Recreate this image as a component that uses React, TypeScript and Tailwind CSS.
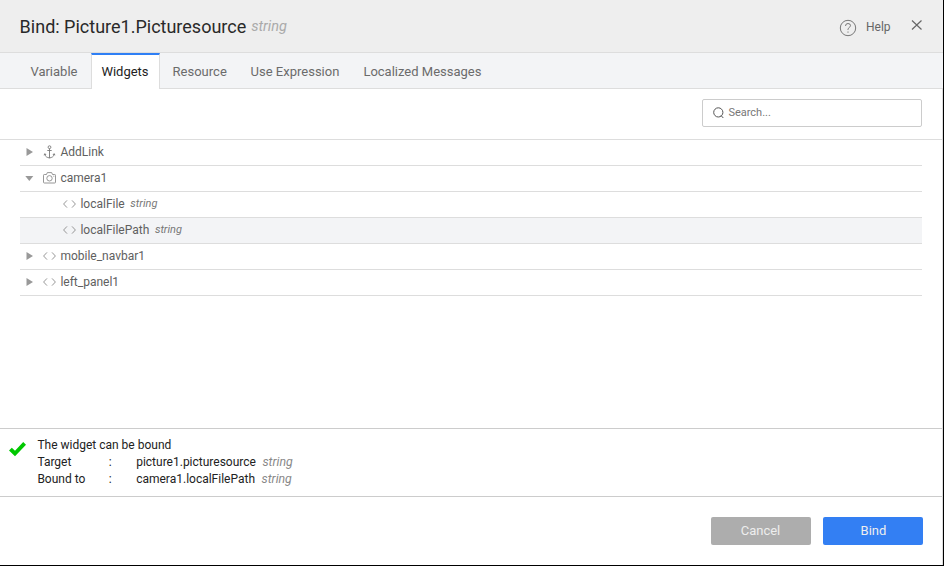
import type { ReactNode } from 'react';

const tabs = [
  { label: 'Variable', box: 'w-[71px] pl-[10.4px]' },
  { label: 'Widgets', box: 'w-[69px] pl-[9.4px]' },
  { label: 'Resource', box: 'w-[78px] pl-[12.6px]' },
  { label: 'Use Expression', box: 'w-[113px] pl-[12.6px]' },
  { label: 'Localized Messages', box: 'w-[140px] pl-[12.4px]' },
];

function CodeIcon() {
  return (
    <svg width="13" height="12" viewBox="0 0 13 12" fill="none" stroke="#8b8b8b" strokeWidth="0.9">
      <path d="M4 2.400.6 6 4 9.600M9 2.400 12.400 6 9 9.600" />
    </svg>
  );
}

function AnchorIcon() {
  return (
    <svg width="13" height="14" viewBox="0 0 13 14" fill="none" stroke="#777" strokeWidth="0.9">
      <circle cx="6.500" cy="2.200" r="1.400" />
      <path d="M6.500 3.600V13M4.300 5.500h4.400M1.900 8.800v1C2.300 11.500 4 12.500 6.500 13c2.500-.5 4.200-1.500 4.600-3.200v-1M1 10.200l.9-1.500 1.200 1.300M12 10.200l-.9-1.500L9.900 10" />
    </svg>
  );
}

function CameraIcon() {
  return (
    <svg width="13" height="12" viewBox="0 0 13 12" fill="none" stroke="#8b8b8b" strokeWidth="0.9">
      <path d="M1.300 2.500h2.200l.8-1.900h4.400l.8 1.900h2.200q.8 0 .8.800v6.900q0 .8-.8.800H1.300q-.8 0-.8-.8V3.300q0-.8.800-.8Z" />
      <circle cx="6.500" cy="6.300" r="2.700" />
      <path d="M10.300 4.200h1" />
    </svg>
  );
}

function Caret({ open }: { open?: boolean }) {
  return (
    <svg width="10" height="10" viewBox="0 0 10 10" fill="#999">
      {open ? <path d="M1.300 3h8L5.300 8Z" /> : <path d="M2.500 1v8L9 5Z" />}
    </svg>
  );
}

type RowProps = { icon: ReactNode; label: string; caret?: 'open' | 'closed'; type?: string; selected?: boolean };

function Row({ icon, label, caret, type, selected }: RowProps) {
  return (
    <div className={`flex h-[26px] items-center border-b border-[#ddd] pb-px text-[#606060] ${selected ? 'bg-[#f3f4f6]' : ''} ${caret ? 'pl-[4px]' : 'pl-[43px]'}`}>
      {caret && <span className="mr-[9px] w-[10px]"><Caret open={caret === 'open'} /></span>}
      <span className="flex w-[13px] shrink-0 justify-center">{icon}</span>
      <span className="ml-[4.400px] text-[12px] leading-[20px]">{label}</span>
      {type && <span className="ml-[5.600px] text-[11px] italic leading-[20px] text-[#777]">{type}</span>}
    </div>
  );
}

function Binding({ name, value }: { name: string; value: string }) {
  return (
    <div className="flex h-[17px] items-center">
      <span className="w-[71.400px]">{name}</span>
      <span className="w-[27.400px]">:</span>
      <span>{value}</span>
      <span className="ml-[6.500px] text-[12.300px] italic leading-[16px] pt-px text-[#888]">string</span>
    </div>
  );
}

export default function App() {
  return (
    <div className="h-[566px] w-[944px] bg-black pb-px pr-px font-['Roboto',sans-serif]">
      <div className="flex h-[565px] w-[943px] flex-col overflow-hidden bg-white">
        <header className="flex h-[53px] shrink-0 items-center justify-between border-b border-[#ddd] bg-[#eee] pl-[19.600px] pr-[20px]">
          <div className="flex items-center pt-[2px]">
            <h1 className="text-[18px] leading-[26px] text-[#292929]">Bind: Picture1.Picturesource</h1>
            <span className="ml-[5px] text-[14.500px] italic leading-[26px] text-[#aaa]">string</span>
          </div>
          <div className="flex items-center">
            <svg className="mt-[3px]" width="18" height="18" viewBox="0 0 18 18" fill="none" stroke="#777" strokeWidth="1">
              <circle cx="9" cy="9" r="7.700" />
              <path d="M6.500 7q0-2.500 2.500-2.500T11.500 6.700C11.500 8.300 9 8.500 9 10.500v.5M9 12.500v1.200" />
            </svg>
            <span className="ml-[9px] mt-[2px] w-[45px] text-[12px] leading-[20px] text-[#666]">Help</span>
            <svg className="-mt-[2px]" width="12" height="12" viewBox="0 0 12 12" stroke="#666" strokeWidth="1.200">
              <path d="m1 1.500 9.500 9M10.500 1.500 1 10.500" />
            </svg>
          </div>
        </header>
        <nav className="flex h-[36px] shrink-0 bg-[#f3f4f6] text-[13px] text-[#6b6b6b]">
          <span className="w-[20px] border-b border-[#ddd]" />
          {tabs.map((tab) => (
            <button
              key={tab.label}
              className={`h-[36px] whitespace-nowrap text-left ${tab.box} ${
                tab.label === 'Widgets'
                  ? 'border-x border-t-2 border-x-[#ddd] border-t-[#2f7ff5] bg-white text-[#222]'
                  : 'border-b border-[#ddd] pt-[3px]'
              }`}
            >
              {tab.label}
            </button>
          ))}
          <span className="grow border-b border-[#ddd]" />
        </nav>
        <main className="flex grow flex-col border-r border-[#ddd]">
          <div className="flex h-[51px] justify-end border-b border-[#ddd] pr-[20px] pt-[10px]">
            <div className="flex h-[28px] w-[220px] items-center rounded-[2px] border border-[#ccc] pl-[10px]">
              <svg width="11" height="12" viewBox="0 0 11 12" fill="none" stroke="#555" strokeWidth="1">
                <circle cx="5.300" cy="5.400" r="4.600" />
                <path d="m8 8.500 2.300 2.500" />
              </svg>
              <input className="ml-[4.400px] w-[180px] pt-px text-[11px] outline-none placeholder:text-[#777]" placeholder="Search..." />
            </div>
          </div>
          <div className="ml-[20px] mr-[20px] h-[288px]">
            <Row caret="closed" icon={<AnchorIcon />} label="AddLink" />
            <Row caret="open" icon={<CameraIcon />} label="camera1" />
            <Row icon={<CodeIcon />} label="localFile" type="string" />
            <Row icon={<CodeIcon />} label="localFilePath" type="string" selected />
            <Row caret="closed" icon={<CodeIcon />} label="mobile_navbar1" />
            <Row caret="closed" icon={<CodeIcon />} label="left_panel1" />
          </div>
          <section className="flex h-[69px] items-start border-y border-[#ccc] pl-[9px] pt-[7px] text-[12px] text-[#222]">
            <svg className="mt-[6px]" width="18" height="15" viewBox="0 0 18 15" fill="#00c800">
              <path d="M0 8.500 2.800 5.800 6 8.700 14.200 0 17 2.800 6 14.300Z" />
            </svg>
            <div className="ml-[10.400px]">
              <div className="flex h-[17px] items-center">The widget can be bound</div>
              <Binding name="Target" value="picture1.picturesource" />
              <Binding name="Bound to" value="camera1.localFilePath" />
            </div>
          </section>
          <footer className="flex gap-[12px] pl-[711px] pt-[20px] text-[13px] text-[#eee]">
            <button className="h-[28px] w-[100px] shrink-0 rounded-[2px] bg-[#adadad] pb-px pr-px">Cancel</button>
            <button className="h-[28px] w-[100px] shrink-0 rounded-[2px] bg-[#337ff3] pb-px pl-px">Bind</button>
          </footer>
        </main>
      </div>
    </div>
  );
}
